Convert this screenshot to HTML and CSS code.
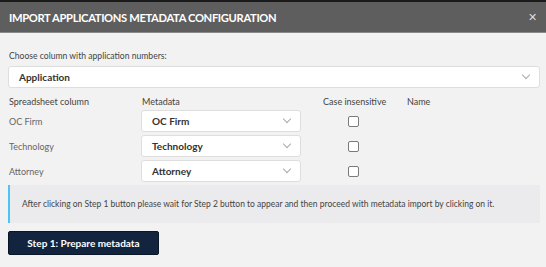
FILE: index.html
```html
<!DOCTYPE html>
<html>
<head>
<meta charset="utf-8">
<title>Import applications metadata configuration</title>
<link rel="stylesheet" href="styles.css">
</head>
<body>
	<div class="modal">
		<div class="head">
			<span class="title">IMPORT APPLICATIONS METADATA CONFIGURATION</span>
			<span class="close">&#x2715;</span>
		</div>
		<div class="body">
			<div class="label">Choose column with application numbers:</div>
			<div class="select wide"><span>Application</span><i class="chev"></i></div>

			<div class="grid">
				<div class="th">Spreadsheet column</div>
				<div class="th">Metadata</div>
				<div class="th case">Case insensitive</div>
				<div class="th">Name</div>

				<div class="col">OC Firm</div>
				<div class="select"><span>OC Firm</span><i class="chev"></i></div>
				<div class="box"><span class="check"></span></div>
				<div></div>

				<div class="col">Technology</div>
				<div class="select"><span>Technology</span><i class="chev"></i></div>
				<div class="box"><span class="check"></span></div>
				<div></div>

				<div class="col">Attorney</div>
				<div class="select"><span>Attorney</span><i class="chev"></i></div>
				<div class="box"><span class="check"></span></div>
				<div></div>
			</div>

			<div class="info">After clicking on Step 1 button please wait for Step 2 button to appear and then proceed with metadata import by clicking on it.</div>

			<div class="btn">Step 1: Prepare metadata</div>
		</div>
	</div>
</body>
</html>
```

FILE: styles.css
```css
*{margin:0; padding:0; box-sizing:border-box;}
body{font-family:Lato, "Open Sans", sans-serif; background:#f2f2f2; width:546px; height:267px; overflow:hidden;}

.modal{display:flex; flex-direction:column;}
.head{height:33px; background:#5e5e5e; border-top:2px solid #1a1a1a; border-bottom:1px solid #8a8a8a; display:flex; align-items:center; justify-content:space-between; padding:0 9px 0 9px;}
.head .title{color:#fff; font-size:11.2px; font-weight:bold; letter-spacing:-0.35px;}
.head .close{color:#dcdcdc; font-size:11px; font-weight:300;}

.body{padding:18px 6px 0 8px;}
.label{font-size:8.6px; color:#444; margin-left:1px; line-height:11px;}
.select{height:22px; background:#fff; border:1px solid #dedede; border-radius:3px; display:flex; align-items:center; justify-content:space-between; padding:0 10px 0 10px; font-size:10px; font-weight:bold; color:#333;}
.select.wide{margin-top:4px;}
.chev{width:6px; height:6px; border-right:1px solid #aaa; border-bottom:1px solid #aaa; transform:rotate(45deg); margin-top:-4px;}

.grid{display:grid; grid-template-columns:133px 160px 105px 1fr; row-gap:3px; margin-top:8px; align-items:center;}
.grid .th{font-size:9px; color:#444; margin-left:1px; line-height:11px; white-space:nowrap;}
.grid .th.case{margin-left:22px;}
.col{font-size:9px; color:#666; margin-left:1px;}
.box{padding-left:47px;}
.check{display:block; width:11px; height:11px; border:1px solid #7a7a7a; border-radius:2px; background:#fff;}

.info{margin-top:3px; height:38px; background:#ebebed; border-left:2px solid #4dc4f5; padding-left:12px; display:flex; align-items:center; font-size:8.5px; color:#444;}
.btn{margin-top:8px; width:151px; height:24px; background:#13253e; border-radius:2px; border:1px solid #0a1626; color:#fff; font-size:10px; font-weight:bold; display:flex; align-items:center; justify-content:center;}
```
